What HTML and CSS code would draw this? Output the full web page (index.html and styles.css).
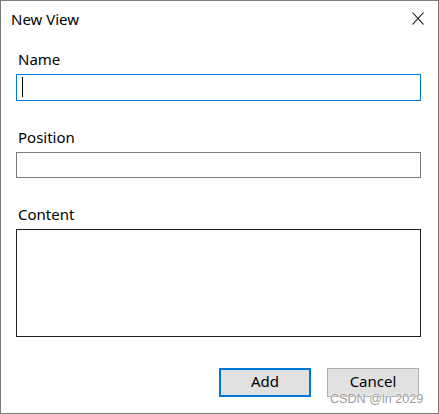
FILE: index.html
```html
<!DOCTYPE html>
<html>
<head>
<meta charset="utf-8">
<link rel="stylesheet" href="styles.css">
</head>
<body>
<div class="window">
  <div class="titlebar">
    <span class="title">New View</span>
    <svg class="close" width="12" height="13" viewBox="0 0 12 13">
      <path d="M0.5 0.5 L11.5 12.5 M11.5 0.5 L0.5 12.5" stroke="#000" stroke-width="1.1" fill="none"/>
    </svg>
  </div>
  <div class="form">
    <div class="label first">Name</div>
    <div class="field focused"><span class="caret"></span></div>
    <div class="label">Position</div>
    <div class="field"></div>
    <div class="label">Content</div>
    <div class="area"></div>
    <div class="buttons">
      <div class="btn default">Add</div>
      <div class="btn">Cancel</div>
    </div>
  </div>
  <div class="watermark">CSDN @ln 2029</div>
</div>
</body>
</html>
```

FILE: styles.css
```css
* { box-sizing: border-box; }
html, body { margin: 0; padding: 0; background: #fff; }
body { font-family: "Noto Sans", "Open Sans", sans-serif; font-size: 15px; color: #000; }
.window {
  position: relative;
  width: 439px;
  height: 414px;
  border: 1px solid #7a7a7a;
  background: #fff;
  overflow: hidden;
}
.titlebar {
  display: flex;
  justify-content: space-between;
  align-items: flex-start;
  padding: 8px 14px 0 10px;
  height: 28px;
}
.title { line-height: 20px; }
.close { margin-top: 3px; }
.form {
  display: flex;
  flex-direction: column;
  padding: 0 17px 0 15px;
}
.label {
  line-height: 20px;
  padding-left: 2px;
  margin-top: 26px;
  margin-bottom: 5px;
}
.label.first { margin-top: 20px; }
.field {
  height: 26px;
  border: 1px solid #7a7a7a;
  display: flex;
  align-items: flex-start;
}
.field.focused { height: 27px; border-color: #0078d7; }
.caret {
  width: 1px;
  height: 20px;
  background: #000;
  margin: 2px 0 0 5px;
}
.area {
  height: 108px;
  border: 1px solid #1e1e1e;
}
.buttons {
  display: flex;
  justify-content: flex-end;
  gap: 16px;
  margin-top: 31px;
  margin-right: 2px;
}
.btn {
  width: 92px;
  height: 29px;
  background: #e1e1e1;
  border: 1px solid #adadad;
  display: flex;
  align-items: center;
  justify-content: center;
  line-height: 20px;
  padding-bottom: 3px;
}
.btn.default { border: 2px solid #0078d7; }
.watermark {
  position: absolute;
  left: 329px;
  top: 391px;
  font-family: "Liberation Sans", Arial, sans-serif;
  font-size: 12.6px;
  line-height: 14px;
  color: #9c9c9c;
  text-shadow: 0 0 1px #fff, 0 0 1px #fff, 0 0 2px #fff;
}
```
